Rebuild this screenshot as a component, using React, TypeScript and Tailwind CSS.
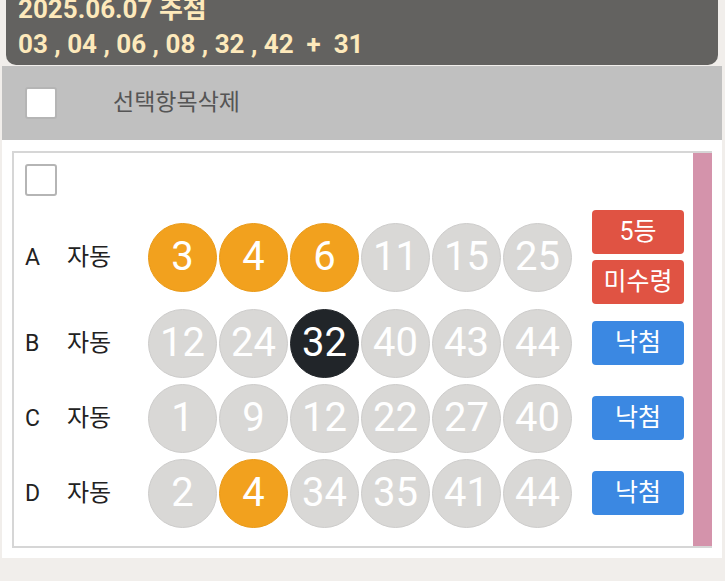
const font = "font-['Roboto','Noto_Sans_CJK_KR',sans-serif]";

type Ball = { n: number; tone: "gray" | "orange" | "black" };
type Row = { label: string; balls: Ball[]; badges: { text: string; color: "red" | "blue" }[] };

const g = (n: number): Ball => ({ n, tone: "gray" });
const o = (n: number): Ball => ({ n, tone: "orange" });
const k = (n: number): Ball => ({ n, tone: "black" });

const rows: Row[] = [
    { label: "A", balls: [o(3), o(4), o(6), g(11), g(15), g(25)], badges: [{ text: "5등", color: "red" }, { text: "미수령", color: "red" }] },
    { label: "B", balls: [g(12), g(24), k(32), g(40), g(43), g(44)], badges: [{ text: "낙첨", color: "blue" }] },
    { label: "C", balls: [g(1), g(9), g(12), g(22), g(27), g(40)], badges: [{ text: "낙첨", color: "blue" }] },
    { label: "D", balls: [g(2), o(4), g(34), g(35), g(41), g(44)], badges: [{ text: "낙첨", color: "blue" }] },
];

const ballClass = {
    gray: "bg-[#d9d8d6] border border-[#cdcccb]",
    orange: "bg-[#f2a11e] border border-[#e99a18]",
    black: "bg-[#212529] border border-[#212529]",
};

function Checkbox() {
    return <div className="w-[32px] h-[32px] bg-white border-2 border-[#b5b5b5] rounded-[3px]" />;
}

function LottoRow({ row }: { row: Row }) {
    const tall = row.badges.length > 1;
    return <div className={`flex items-center ${tall ? "h-[92px]" : "h-[70px]"}`}>
        <span className="w-[42px] text-[23px] text-[#222] leading-none">{row.label}</span>
        <span className="w-[81px] text-[24px] text-[#222] leading-none">자동</span>
        <div className="flex gap-[2px]">
            {row.balls.map((b, i) => (
                <div key={i} className={`w-[69px] h-[69px] rounded-full flex items-center justify-center text-white text-[40px] leading-none ${ballClass[b.tone]}`}>
                    {b.n}
                </div>
            ))}
        </div>
        <div className="ml-[20px] flex flex-col gap-[6px]">
            {row.badges.map((b, i) => (
                <div key={i} className={`w-[92px] h-[44px] rounded-[4px] flex items-center justify-center text-white text-[25px] ${b.color === "red" ? "bg-[#e05343]" : "bg-[#3b88e2]"}`}>
                    {b.text}
                </div>
            ))}
        </div>
    </div>;
}

export default function App() {
    return <div className={`w-[725px] h-[581px] bg-[#f1eeeb] overflow-hidden ${font}`}>
        <div className="ml-[2px] w-[720px]">
            {/* draw result */}
            <div className="mx-[4px] -mt-[8px] bg-[#636260] rounded-b-[10px] pl-[12px] pb-[3px] text-[#fde9bb] text-[26px] font-bold leading-[35px]">
                <div>2025.06.07 추첨</div>
                <div className="whitespace-pre">03 , 04 , 06 , 08 , 32 , 42  +  31</div>
            </div>

            {/* toolbar */}
            <div className="mt-[1px] h-[74px] bg-[#c0c0c0] flex items-center pl-[23px]">
                <Checkbox />
                <span className="ml-[56px] text-[23px] text-[#555]">선택항목삭제</span>
            </div>

            {/* tickets */}
            <div className="bg-white h-[418px] pt-[11px] px-[10px]">
                <div className="h-[397px] border-2 border-r-0 border-[#d6d6d6] flex">
                    <div className="flex-1 pl-[11px] pt-[11px]">
                        <Checkbox />
                        <div className="mt-[15px] flex flex-col gap-[5px]">
                            {rows.map((r) => <LottoRow key={r.label} row={r} />)}
                        </div>
                    </div>
                    <div className="w-[19px] bg-[#d493ab]" />
                </div>
            </div>
        </div>
    </div>;
}
